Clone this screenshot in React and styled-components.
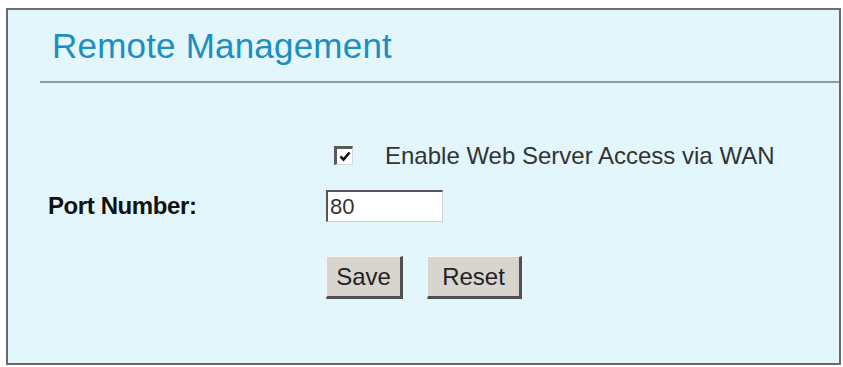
import React from "react";
import styled, { createGlobalStyle } from "styled-components";

const Global = createGlobalStyle`
  html, body { margin: 0; padding: 0; background: #ffffff; }
  body { font-family: "Liberation Sans", Arial, sans-serif; }
`;

const Page = styled.div`
  padding: 8px 0 0 6px;
`;

const Panel = styled.div`
  box-sizing: border-box;
  width: 835px;
  height: 357px;
  background: #e3f6fc;
  border: 2px solid #6a6a6a;
  border-top-color: #707070;
  padding-top: 16px;
  display: flex;
  flex-direction: column;
`;

const Title = styled.h1`
  margin: 0 0 15px 44px;
  font-size: 35px;
  line-height: 40px;
  font-weight: normal;
  color: #1b8ec2;
  letter-spacing: 0.2px;
`;

const Rule = styled.div`
  height: 2px;
  margin-left: 32px;
  background: #8c9ca2;
`;

const Form = styled.div`
  display: grid;
  grid-template-columns: 278px 1fr;
  grid-template-rows: 32px 32px 43px;
  row-gap: 18px;
  margin-top: 57px;
  padding-left: 40px;
  & > :nth-child(5), & > :nth-child(6) { margin-top: 32px; }
`;

const Label = styled.div`
  display: flex;
  align-items: center;
  font-size: 24px;
  font-weight: bold;
  color: #111;
  letter-spacing: -0.4px;
`;

const Cell = styled.div`
  display: flex;
  align-items: center;
  gap: ${(p) => p.$gap || 0}px;
`;

const Check = styled.span`
  box-sizing: border-box;
  width: 19px;
  height: 19px;
  margin-left: 8px;
  margin-top: -2px;
  background: #fff;
  border-top: 3px solid #5a5a5a;
  border-left: 3px solid #5a5a5a;
  border-right: 1px solid #d8d8d8;
  border-bottom: 1px solid #d8d8d8;
  display: flex;
  align-items: center;
  justify-content: center;
`;

const CheckText = styled.span`
  margin-left: 32px;
  font-size: 24px;
  color: #333;
`;

const Input = styled.div`
  box-sizing: border-box;
  width: 117px;
  height: 32px;
  background: #fff;
  border-top: 2px solid #555;
  border-left: 2px solid #555;
  border-right: 1px solid #d0d0d0;
  border-bottom: 1px solid #d0d0d0;
  padding-left: 2px;
  font-size: 22px;
  line-height: 30px;
  color: #333;
`;

const Button = styled.div`
  box-sizing: border-box;
  width: ${(p) => p.$w}px;
  height: 43px;
  background: #d8d5cf;
  border-top: 1px solid #f4f4f2;
  border-left: 1px solid #f4f4f2;
  border-right: 3px solid #505050;
  border-bottom: 3px solid #505050;
  display: flex;
  align-items: center;
  justify-content: center;
  font-size: 24px;
  color: #222;
`;

export default function App() {
  return (
    <Page>
      <Global />
      <Panel>
        <Title>Remote Management</Title>
        <Rule />
        <Form>
          <div />
          <Cell>
            <Check>
              <svg width="12" height="11" viewBox="0 0 12 11">
                <path d="M1.5 5.5 L4.5 8.5 L10.5 1.5" fill="none" stroke="#111" strokeWidth="2.6" />
              </svg>
            </Check>
            <CheckText>Enable Web Server Access via WAN</CheckText>
          </Cell>
          <Label>Port Number:</Label>
          <Cell>
            <Input>80</Input>
          </Cell>
          <div />
          <Cell $gap={24}>
            <Button $w={77}>Save</Button>
            <Button $w={95}>Reset</Button>
          </Cell>
        </Form>
      </Panel>
    </Page>
  );
}
